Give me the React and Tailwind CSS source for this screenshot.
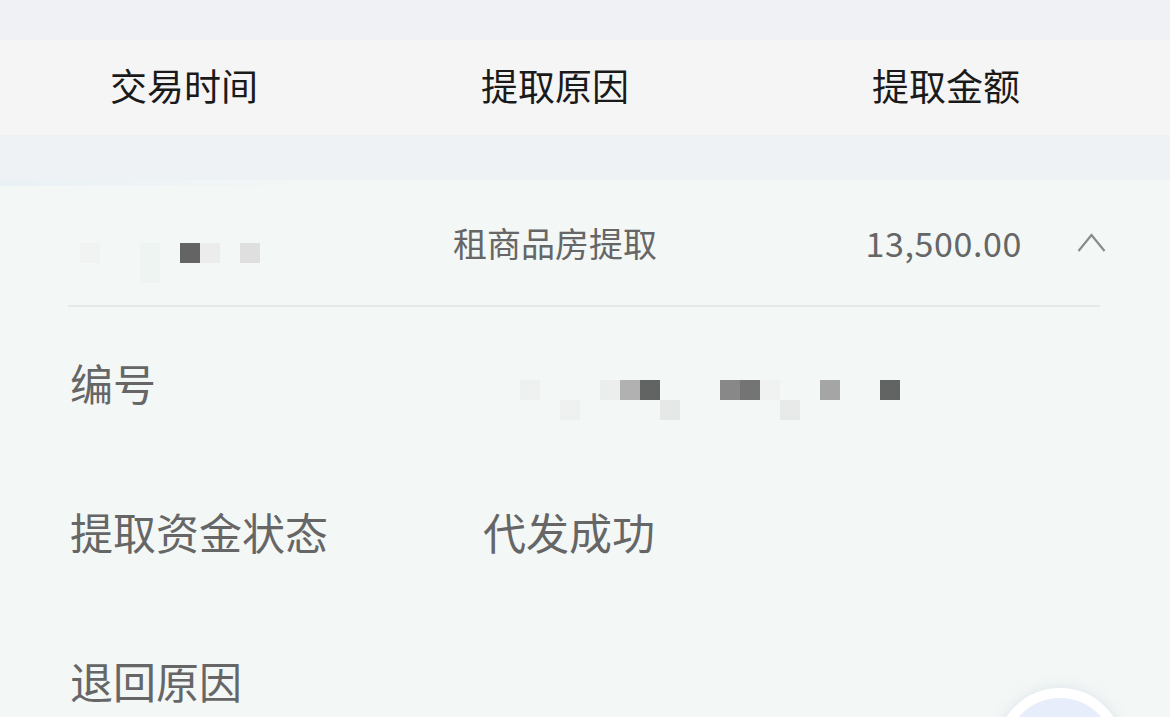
import React from "react";

const font = { fontFamily: '"Noto Sans CJK SC", "Noto Sans", sans-serif' };

function DateMosaic() {
  return (
    <svg width="180" height="40" className="mt-[35px] ml-[80px]">
      <rect x="0" y="0" width="20" height="20" fill="#f0f3f2" />
      <rect x="60" y="0" width="20" height="40" fill="#eef4f2" />
      <rect x="100" y="0" width="20" height="20" fill="#636463" />
      <rect x="120" y="0" width="20" height="20" fill="#ebeceb" />
      <rect x="160" y="0" width="20" height="20" fill="#dedfde" />
    </svg>
  );
}

function NumberMosaic() {
  const top = [
    [37, "#eff1f0"],
    [117, "#ebeeed"],
    [137, "#b0b1b0"],
    [157, "#626463"],
    [237, "#878887"],
    [257, "#737473"],
    [277, "#f0f2f1"],
    [337, "#a4a5a4"],
    [397, "#626463"],
  ];
  const bottom = [
    [77, "#eff1f0"],
    [177, "#e6e8e7"],
    [297, "#e8eae9"],
  ];
  return (
    <svg width="420" height="40" className="mt-[30px]">
      {top.map(([x, c]) => (
        <rect key={"t" + x} x={x} y="0" width="20" height="20" fill={c} />
      ))}
      {bottom.map(([x, c]) => (
        <rect key={"b" + x} x={x} y="20" width="20" height="20" fill={c} />
      ))}
    </svg>
  );
}

export default function App() {
  return (
    <div
      className="relative w-[1170px] h-[717px] overflow-hidden bg-[#f3f7f6]"
      style={font}
    >
      <div className="h-[40px] bg-[#eff1f4]" />
      <div className="h-[95px] pb-[4px] bg-[#f5f5f5] grid grid-cols-[368px_374px_408px] items-center text-[37px] text-[#1a1a1a] leading-none">
        <div className="text-center">交易时间</div>
        <div className="text-center">提取原因</div>
        <div className="text-center">提取金额</div>
      </div>
      <div className="h-[45px] bg-[#eff2f4]" />
      <div className="h-[6px] w-[320px] bg-gradient-to-r from-[#eaf1f5] to-[#f3f7f6]" />

      <div className="h-[119px] grid grid-cols-[368px_374px_428px] items-center text-[#666666] leading-none">
        <div className="flex">
          <DateMosaic />
        </div>
        <div className="text-center text-[34px] pb-[5px]">租商品房提取</div>
        <div className="flex items-center justify-end pr-[63px] pb-[5px]">
          <span className="text-[34px] tracking-[0.6px] text-[#666666]">13,500.00</span>
          <svg width="30" height="20" viewBox="0 0 30 20" className="ml-[55px]">
            <polyline
              points="1.5,18 14.5,2 27.5,18"
              fill="none"
              stroke="#8a8a8a"
              strokeWidth="2.2"
            />
          </svg>
        </div>
      </div>
      <div className="ml-[68px] w-[1032px] h-[2px] bg-[#e6e9e9]" />

      <div className="pt-[3px] px-[70px] text-[43px] text-[#666666] leading-none">
        <div className="h-[149px] flex items-center">
          <div className="w-[413px] pb-[4px]">编号</div>
          <NumberMosaic />
        </div>
        <div className="h-[149px] flex items-center pb-[4px]">
          <div className="w-[413px]">提取资金状态</div>
          <div>代发成功</div>
        </div>
        <div className="h-[149px] flex items-center pb-[4px]">
          <div className="w-[413px]">退回原因</div>
        </div>
      </div>

      <div className="absolute left-[996px] top-[688px] w-[128px] h-[128px] rounded-full border-[10px] border-white bg-[#e7edfa] shadow-[0_0_12px_rgba(200,210,225,0.5)]" />
    </div>
  );
}
